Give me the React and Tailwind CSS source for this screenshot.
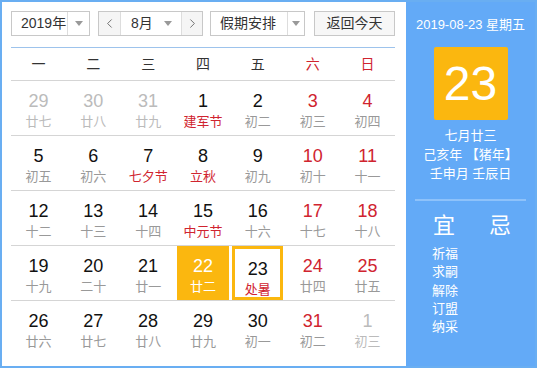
import { ChevronLeft, ChevronRight } from "lucide-react";

const RED = "text-[#d0242f]";

const weeks = [
  [
    { d: 29, l: "廿七", o: true },
    { d: 30, l: "廿八", o: true },
    { d: 31, l: "廿九", o: true },
    { d: 1, l: "建军节", f: true },
    { d: 2, l: "初二" },
    { d: 3, l: "初三", w: true },
    { d: 4, l: "初四", w: true },
  ],
  [
    { d: 5, l: "初五" },
    { d: 6, l: "初六" },
    { d: 7, l: "七夕节", f: true },
    { d: 8, l: "立秋", f: true },
    { d: 9, l: "初九" },
    { d: 10, l: "初十", w: true },
    { d: 11, l: "十一", w: true },
  ],
  [
    { d: 12, l: "十二" },
    { d: 13, l: "十三" },
    { d: 14, l: "十四" },
    { d: 15, l: "中元节", f: true },
    { d: 16, l: "十六" },
    { d: 17, l: "十七", w: true },
    { d: 18, l: "十八", w: true },
  ],
  [
    { d: 19, l: "十九" },
    { d: 20, l: "二十" },
    { d: 21, l: "廿一" },
    { d: 22, l: "廿二", sel: true },
    { d: 23, l: "处暑", f: true, today: true },
    { d: 24, l: "廿四", w: true },
    { d: 25, l: "廿五", w: true },
  ],
  [
    { d: 26, l: "廿六" },
    { d: 27, l: "廿七" },
    { d: 28, l: "廿八" },
    { d: 29, l: "廿九" },
    { d: 30, l: "初一" },
    { d: 31, l: "初二", w: true },
    { d: 1, l: "初三", o: true },
  ],
];

function Caret() {
  return (
    <span className="w-0 h-0 border-l-[4px] border-r-[4px] border-t-[5px] border-l-transparent border-r-transparent border-t-[#999]" />
  );
}

function Cell({ c }) {
  let num = "text-[#111]";
  let lun = "text-[#999]";
  if (c.o) {
    num = "text-[#bbb]";
    lun = "text-[#bbb]";
  } else if (c.w) {
    num = RED;
  }
  if (c.f) lun = RED;
  if (c.sel) {
    num = "text-white";
    lun = "text-white";
  }
  return (
    <div
      className={
        "flex flex-col items-center pt-[10px] h-[54px] " +
        (c.sel ? "bg-[#fbb70f] mx-[1px] " : "") +
        (c.today ? "border-[3px] border-[#fbb70f] mx-[2px] pt-[7px] " : "")
      }
    >
      <span className={"text-[18px] leading-[20px] " + num}>{c.d}</span>
      <span className={"text-[13px] leading-[20px] mt-[1px] " + lun}>{c.l}</span>
    </div>
  );
}

export default function App() {
  return (
    <div
      className="w-[537px] h-[368px] border-2 border-[#69aef2] flex bg-white overflow-hidden"
      style={{ fontFamily: '"Liberation Sans", "Noto Sans CJK SC", sans-serif' }}
    >
      {/* LEFT */}
      <div className="w-[404px] pl-[9px] pt-[9px] bg-white">
        <div className="w-[384px]">
          <div className="flex items-center h-[25px] text-[14px] text-[#333]">
            <div className="flex w-[79px] h-[25px] border border-[#c8c8c8]">
              <span className="w-[55px] pl-[9px] leading-[23px]">2019年</span>
              <span className="flex-1 flex items-center justify-center border-l border-[#ddd]">
                <Caret />
              </span>
            </div>
            <div className="flex ml-[8px] w-[105px] h-[25px] border border-[#c8c8c8]">
              <span className="w-[22px] flex items-center justify-center bg-[#f5f5f5] border-r border-[#ddd]">
                <ChevronLeft size={15} strokeWidth={1.3} color="#555" />
              </span>
              <span className="w-[60px] flex items-center">
                <span className="pl-[10px] w-[43px] leading-[23px]">8月</span>
                <Caret />
              </span>
              <span className="flex-1 flex items-center justify-center bg-[#f5f5f5] border-l border-[#ddd]">
                <ChevronRight size={15} strokeWidth={1.3} color="#555" />
              </span>
            </div>
            <div className="flex ml-[7px] w-[95px] h-[25px] border border-[#c8c8c8]">
              <span className="w-[76px] pl-[9px] leading-[23px]">假期安排</span>
              <span className="flex-1 flex items-center justify-center border-l border-[#ddd]">
                <Caret />
              </span>
            </div>
            <button className="ml-[9px] w-[81px] h-[25px] border border-[#c8c8c8] bg-[#f7f7f7] text-[14px] text-[#333] leading-[23px]">
              返回今天
            </button>
          </div>

          <div className="mt-[11px] border-t border-[#9dc3ec]" />
          <div className="grid grid-cols-7 h-[33px] items-center text-[14px] border-b border-[#d5d5d5]">
            {["一", "二", "三", "四", "五", "六", "日"].map((w, i) => (
              <span key={w} className={"text-center " + (i > 4 ? RED : "text-[#333]")}>
                {w}
              </span>
            ))}
          </div>

          {weeks.map((row, i) => (
            <div
              key={i}
              className={"grid grid-cols-7 " + (i < 4 ? "border-b border-[#d5d5d5]" : "")}
            >
              {row.map((c, j) => (
                <Cell key={j} c={c} />
              ))}
            </div>
          ))}
        </div>
      </div>

      {/* RIGHT */}
      <div className="flex-1 bg-[#63aaf7] text-white flex flex-col items-center">
        <div className="mt-[14px] text-[13px] leading-[18px]">2019-08-23 星期五</div>
        <div className="mt-[13px] w-[74px] h-[73px] bg-[#fbb70f] rounded-[2px] flex items-center justify-center text-[48px] leading-none">
          23
        </div>
        <div className="mt-[6px] text-[13px] leading-[19px] text-center">
          <div>七月廿三</div>
          <div>己亥年 【猪年】</div>
          <div>壬申月 壬辰日</div>
        </div>
        <div className="mt-[16px] w-[111px] border-t-2 border-[#8ec2fa]" />
        <div className="w-full pl-[27px] mt-[12px] flex text-[22px] leading-[26px]">
          <span className="w-[56px]">宜</span>
          <span>忌</span>
        </div>
        <div className="w-full pl-[26px] mt-[6px] text-[13px] leading-[18.3px]">
          <div>祈福</div>
          <div>求嗣</div>
          <div>解除</div>
          <div>订盟</div>
          <div>纳采</div>
        </div>
      </div>
    </div>
  );
}
